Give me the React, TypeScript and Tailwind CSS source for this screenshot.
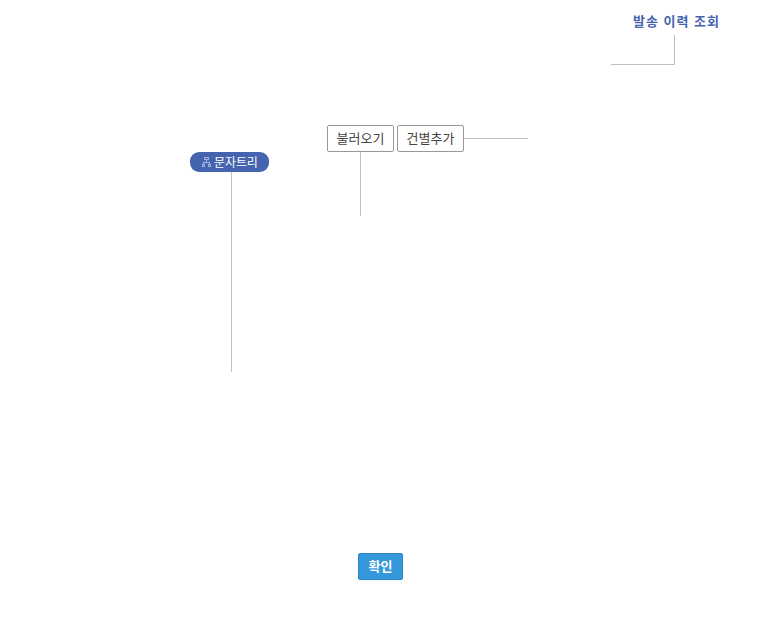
import type { ReactNode } from "react";

function TreeIcon() {
  return (
    <svg
      width="9"
      height="10"
      viewBox="0 0 9 10"
      fill="none"
      stroke="#a5b4da"
      shapeRendering="crispEdges"
      className="shrink-0"
    >
      <path d="M2.5 0.5h4v2h-4zM4.5 3v2M1.5 7V5.5h6V7M0.5 7.5h2v2h-2zM6.5 7.5h2v2h-2z" />
    </svg>
  );
}

function OutlineButton({ children }: { children: ReactNode }) {
  return (
    <button className="flex h-[27px] w-[67px] items-center justify-center rounded-[2px] border border-[#999999] bg-white text-[13px] leading-none tracking-[0.05px] whitespace-nowrap text-[#444444]">
      {children}
    </button>
  );
}

export default function App() {
  return (
    <div className="flex h-[620px] w-[760px] flex-col overflow-hidden bg-white font-['Liberation_Sans','Noto_Sans_CJK_KR',sans-serif]">
      <header className="h-[125px] pt-[15px]">
        <h1 className="ml-[633px] h-5 text-[13px] leading-[14px] font-bold tracking-[1px] whitespace-nowrap text-[#4564b0]">
          발송 이력 조회
        </h1>
        <div className="ml-[611px] h-[30px] w-16 border-r border-b border-[#bfbfbf]" />
      </header>

      <main className="flex h-[428px] items-start pl-[190px]">
        <div className="w-[79px] pt-[27px]">
          <button className="flex h-5 w-full items-center gap-[3px] rounded-[9px] bg-[#4564b0] pl-3 text-[12px] leading-none whitespace-nowrap text-white">
            <TreeIcon />
            <span className="pt-px tracking-[-0.1px]">문자트리</span>
          </button>
          <div className="ml-[41px] h-[200px] w-px bg-[#bfbfbf]" />
        </div>

        <div className="ml-[58px] flex items-start">
          <div>
            <OutlineButton>불러오기</OutlineButton>
            <div className="ml-[33px] h-16 w-px bg-[#bfbfbf]" />
          </div>
          <div className="ml-[3px] flex items-center">
            <OutlineButton>건별추가</OutlineButton>
            <div className="h-px w-16 bg-[#bfbfbf]" />
          </div>
        </div>
      </main>

      <footer className="pl-[358px]">
        <button className="flex h-[27px] w-[45px] items-center justify-center rounded-[2px] border border-[#2b87c8] bg-[#3598db] text-[13px] leading-none font-bold whitespace-nowrap text-white">
          확인
        </button>
      </footer>
    </div>
  );
}
